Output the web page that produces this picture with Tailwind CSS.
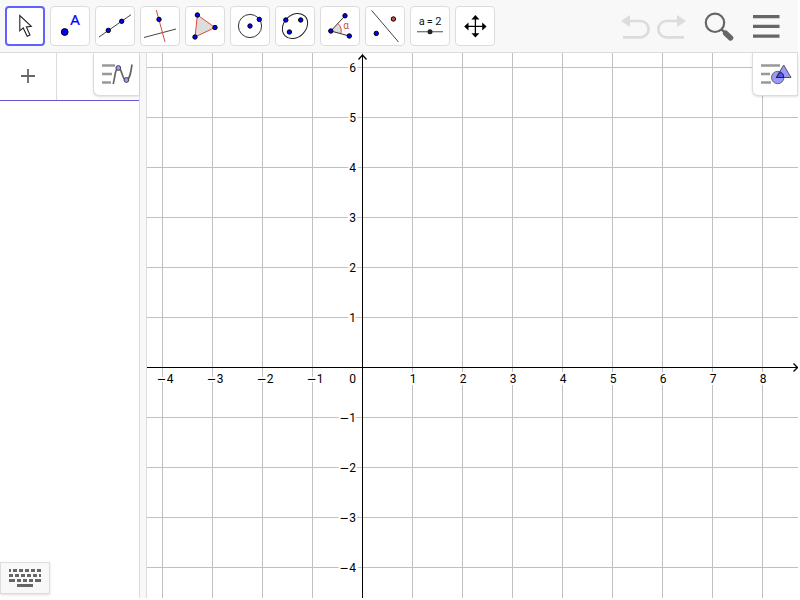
<!DOCTYPE html>
<html lang="en">
<head>
  <meta charset="UTF-8" />
  <meta name="viewport" content="width=device-width, initial-scale=1.0" />
  <title>GeoGebra Classic</title>
  <script src="https://cdn.jsdelivr.net/npm/@tailwindcss/browser@4"></script>
</head>
<body class="bg-white font-['Roboto',sans-serif]">
  <div class="flex flex-col h-screen pr-0.5 pb-0.5 overflow-hidden">
    <header class="flex items-center justify-between shrink-0 bg-[#f8f8f8] border-b border-[#dcdcdc] pl-[5px] pr-[15px] py-1.5">
      <nav aria-label="Tools" class="flex gap-[5px]">
        <button aria-label="Move" aria-pressed="true" class="flex items-center justify-center w-10 h-10 bg-white border-2 border-[#6161ff] rounded">
          <svg class="w-10 h-10 shrink-0" viewBox="0 0 40 40" fill="#fff" stroke="#222"><path d="M14.8 9.5V24.8L18.2 21.9L22.2 30.3L25 29L21.4 21L26.3 20.4Z" stroke-width="1.1"/></svg>
        </button>
        <button aria-label="Point" class="flex items-center justify-center w-10 h-10 bg-white border border-[#dcdcdc] rounded">
          <svg class="w-10 h-10 shrink-0" viewBox="0 0 40 40"><circle cx="14.7" cy="26" r="3.4" fill="#00f" stroke="#000"/><text x="25" y="19" text-anchor="middle" font-size="15" font-family="Noto Sans" fill="#00f" stroke="#00f" stroke-width=".2">A</text></svg>
        </button>
        <button aria-label="Line" class="flex items-center justify-center w-10 h-10 bg-white border border-[#dcdcdc] rounded">
          <svg class="w-10 h-10 shrink-0" viewBox="0 0 40 40" fill="#00f" stroke="#000"><path d="M4 31L36 8.7" stroke="#444"/><circle cx="13.3" cy="24.4" r="2.2"/><circle cx="26.7" cy="15.3" r="2.2"/></svg>
        </button>
        <button aria-label="Perpendicular Line" class="flex items-center justify-center w-10 h-10 bg-white border border-[#dcdcdc] rounded">
          <svg class="w-10 h-10 shrink-0" viewBox="0 0 40 40" fill="#00f" stroke="#000"><path d="M4 31.5L36 23" stroke="#444"/><path d="M16.3 4L25 36" stroke="#dc4a3d"/><circle cx="19" cy="13.4" r="2.2"/></svg>
        </button>
        <button aria-label="Polygon" class="flex items-center justify-center w-10 h-10 bg-white border border-[#dcdcdc] rounded">
          <svg class="w-10 h-10 shrink-0" viewBox="0 0 40 40" fill="#00f" stroke="#000"><path d="M12.4 9L30 21.5L10 31Z" fill="#ddd" stroke="#dc4a3d"/><circle cx="12.4" cy="9" r="2.2"/><circle cx="30" cy="21.5" r="2.2"/><circle cx="10" cy="31" r="2.2"/></svg>
        </button>
        <button aria-label="Circle with Center through Point" class="flex items-center justify-center w-10 h-10 bg-white border border-[#dcdcdc] rounded">
          <svg class="w-10 h-10 shrink-0" viewBox="0 0 40 40" fill="#00f" stroke="#000"><circle cx="20" cy="20" r="11.6" fill="none" stroke="#333"/><circle cx="20" cy="20" r="2.2"/><circle cx="29.3" cy="13.4" r="2.2"/></svg>
        </button>
        <button aria-label="Ellipse" class="flex items-center justify-center w-10 h-10 bg-white border border-[#dcdcdc] rounded">
          <svg class="w-10 h-10 shrink-0" viewBox="0 0 40 40" fill="#00f" stroke="#000"><ellipse cx="20" cy="20" rx="14" ry="11" transform="rotate(-45 20 20)" fill="none" stroke="#222"/><circle cx="10.8" cy="14" r="2.2"/><circle cx="25.7" cy="14" r="2.2"/><circle cx="14.4" cy="26" r="2.2"/></svg>
        </button>
        <button aria-label="Angle" class="flex items-center justify-center w-10 h-10 bg-white border border-[#dcdcdc] rounded">
          <svg class="w-10 h-10 shrink-0" viewBox="0 0 40 40" fill="#00f" stroke="#000"><path d="M10.8 25L17.8 17.4A10.4 10.4 0 0 1 20.9 27.6Z" fill="#ddd" stroke="none"/><path d="M17.8 17.4A10.4 10.4 0 0 1 20.9 27.6" fill="none" stroke="#dc4a3d"/><path d="M25 9.8L10.8 25L29.3 30" fill="none" stroke="#333"/><circle cx="10.8" cy="25" r="2.2"/><circle cx="25" cy="9.8" r="2.2"/><circle cx="29.3" cy="30" r="2.2"/><text x="26" y="23" text-anchor="middle" font-size="10" fill="#dc4a3d" stroke="none">α</text></svg>
        </button>
        <button aria-label="Reflect about Line" class="flex items-center justify-center w-10 h-10 bg-white border border-[#dcdcdc] rounded">
          <svg class="w-10 h-10 shrink-0" viewBox="0 0 40 40" fill="#00f" stroke="#000"><path d="M6.5 4.3L33.5 36" stroke="#444"/><circle cx="11.3" cy="27.4" r="2.2"/><circle cx="28.4" cy="13" r="2.2" fill="#dc4a3d"/></svg>
        </button>
        <button aria-label="Slider" class="flex items-center justify-center w-10 h-10 bg-white border border-[#dcdcdc] rounded">
          <svg class="w-10 h-10 shrink-0" viewBox="0 0 40 40"><text x="20" y="19" text-anchor="middle" font-size="11" fill="#111">a&#8201;=&#8201;2</text><path d="M7 25.7H33" stroke="#777" stroke-width="1.3"/><circle cx="20" cy="25.7" r="2.5" fill="#223"/></svg>
        </button>
        <button aria-label="Move Graphics View" class="flex items-center justify-center w-10 h-10 bg-white border border-[#dcdcdc] rounded">
          <svg class="w-10 h-10 shrink-0" viewBox="0 0 40 40"><path d="M20.4 12V29M12 20.4H29" stroke="#000" stroke-width="1.3"/><path d="M20.4 9L24.4 13.4H16.4ZM20.4 31.5L24.4 27.2H16.4ZM9.2 20.4L13.5 16.4V24.4ZM31.6 20.4L27.2 16.4V24.4Z" fill="#000"/></svg>
        </button>
      </nav>
      <div class="flex items-center">
        <button aria-label="Undo" disabled class="w-9 h-10">
          <svg class="w-9 h-10" viewBox="0 0 36 40" fill="none"><path d="M9 15H21.5A8 8 0 0 1 21.5 31.3H4" stroke="#dcdcdc" stroke-width="2.7"/><path d="M2 15L11 9V21Z" fill="#dcdcdc"/></svg>
        </button>
        <button aria-label="Redo" disabled class="w-9 h-10">
          <svg class="w-9 h-10" viewBox="0 0 36 40" fill="none"><path d="M24 15H11.5A8 8 0 0 0 11.5 31.3H29" stroke="#dcdcdc" stroke-width="2.7"/><path d="M31 15L22 9V21Z" fill="#dcdcdc"/></svg>
        </button>
        <button aria-label="Search" class="ml-2 w-10 h-10">
          <svg class="w-10 h-10" viewBox="0 0 40 40" fill="none" stroke="#666"><circle cx="16" cy="16.8" r="9.2" stroke-width="2.2"/><path d="M22.5 23.3L27 27.7" stroke-width="2.4"/><path d="M26.6 27.2L31.6 32" stroke-width="5.4" stroke-linecap="round"/></svg>
        </button>
        <button aria-label="Menu" class="ml-3 w-8 h-10">
          <svg class="w-8 h-10" viewBox="0 0 32 40"><path d="M2 10.7H28.5M2 20.4H28.5M2 30.1H28.5" stroke="#666" stroke-width="3.3"/></svg>
        </button>
      </div>
    </header>

    <main class="flex flex-1 min-h-0">
      <section aria-label="Algebra" class="relative flex flex-col justify-between w-[139px] shrink-0 bg-white">
        <div class="flex h-12 border-b border-[#6557d2]">
          <button aria-label="Add item" class="flex items-center justify-center w-[57px] pb-px border-r border-[#dcdcdc]">
            <svg class="w-4 h-4" viewBox="0 0 16 16"><path d="M1 8H15M8 1V15" stroke="#666" stroke-width="1.8"/></svg>
          </button>
          <input type="text" aria-label="Input" class="flex-1 min-w-0 px-2 text-sm outline-none">
        </div>
        <button aria-label="Algebra style bar" class="absolute right-0 top-0 w-[46px] h-[43px] bg-white border-l border-b border-[#dcdcdc] rounded-bl-md shadow-sm">
          <svg class="w-[45px] h-[42px]" viewBox="0 0 45 42" fill="none"><path d="M8 12.5H21M8 21H18M8 29.5H17" stroke="#999" stroke-width="2.5"/><path d="M19.2 31C21 25 21 15 24.3 14.7C28 15 28 27 32 27C36 27 37 18 38 11.5" stroke="#666" stroke-width="1.7"/><circle cx="24.3" cy="15" r="2.4" fill="#99f" stroke="#444"/><circle cx="32.4" cy="27" r="2.4" fill="#99f" stroke="#444"/></svg>
        </button>
        <button aria-label="Show keyboard" class="flex items-center justify-center w-[50px] h-8 mb-1 bg-[#f8f8f8] border border-[#dcdcdc] shadow-sm">
          <svg class="w-8 h-5" viewBox="0 0 32 20"><path d="M0 2.5H2M4 2.5H8M10 2.5H14M16 2.5H20M22 2.5H26M28 2.5H32M0 7.5H4M6 7.5H10M12 7.5H16M18 7.5H22M24 7.5H28M30 7.5H32M0 12.5H6M8 12.5H12M14 12.5H18M20 12.5H24M26 12.5H32M8 17.5H24" stroke="#666" stroke-width="3"/></svg>
        </button>
      </section>

      <div role="separator" aria-orientation="vertical" class="w-2 shrink-0 bg-[#f8f8f8] border-x border-[#dcdcdc] cursor-col-resize"></div>

      <section aria-label="Graphics View" class="relative flex-1 min-w-0 bg-white">
        <svg id="plane" class="block w-full h-full" font-size="12"></svg>
        <button aria-label="Graphics style bar" class="absolute right-0 top-0 w-[46px] h-[43px] bg-white border-x border-b border-[#dcdcdc] rounded-bl-md shadow-sm">
          <svg class="w-11 h-[42px]" viewBox="0 0 44 42" fill="none"><path d="M8 12.5H27M8 21H17M8 29.5H18" stroke="#999" stroke-width="2.5"/><circle cx="24.7" cy="24.5" r="6.2" fill="#99f" stroke="#666"/><path d="M30.7 12L38 24.5H23Z" fill="#99f" stroke="#555"/><path d="M27.2 18.8A6.2 6.2 0 0 1 30.9 24.5H23.5Z" fill="#55f" stroke="#222"/></svg>
        </button>
      </section>
    </main>
  </div>

<script>
const plane = document.getElementById('plane');
const unit = 50;
const origin = { x: 215, y: 314 };

function rect(x, y, w, h, color) {
  return `<rect x="${x}" y="${y}" width="${w}" height="${h}" fill="${color}"/>`;
}

function label(n, x, y, anchor) {
  const text = n < 0 ? `<tspan font-family="DejaVu Sans">−</tspan>${-n}` : n;
  return `<text x="${x}" y="${y}" text-anchor="${anchor}" fill="#000" stroke="#fff" stroke-width="4" paint-order="stroke">${text}</text>`;
}

function drawPlane() {
  const w = plane.clientWidth;
  const h = plane.clientHeight;
  let grid = '';
  let labels = '';
  for (let i = Math.ceil(-origin.x / unit); origin.x + i * unit < w; i++) {
    const x = origin.x + i * unit;
    grid += rect(x, 0, 1, h, '#c0c0c0');
    if (i !== 0) labels += label(i, i < 0 ? x + 3 : x + 1, origin.y + 16, 'middle');
  }
  for (let j = Math.ceil(-origin.y / unit); origin.y + j * unit < h; j++) {
    const y = origin.y + j * unit;
    grid += rect(0, y, w, 1, '#c0c0c0');
    if (j !== 0) labels += label(-j, origin.x - 6, y + 5, 'end');
  }
  labels += label(0, origin.x - 6, origin.y + 16, 'end');
  const axes = rect(origin.x, 2, 1, h - 2, '#000') + rect(0, origin.y, w - 1, 1, '#000')
    + `<g transform="translate(.5 .5)" fill="none" stroke="#000" stroke-width="1.3">
      <path d="M${origin.x - 4} 6L${origin.x} 1.5L${origin.x + 4} 6"/>
      <path d="M${w - 5} ${origin.y - 4}L${w - 1} ${origin.y}L${w - 5} ${origin.y + 4}"/></g>`;
  plane.innerHTML = grid + labels + axes;
}

new ResizeObserver(drawPlane).observe(plane);
</script>
</body>
</html>
